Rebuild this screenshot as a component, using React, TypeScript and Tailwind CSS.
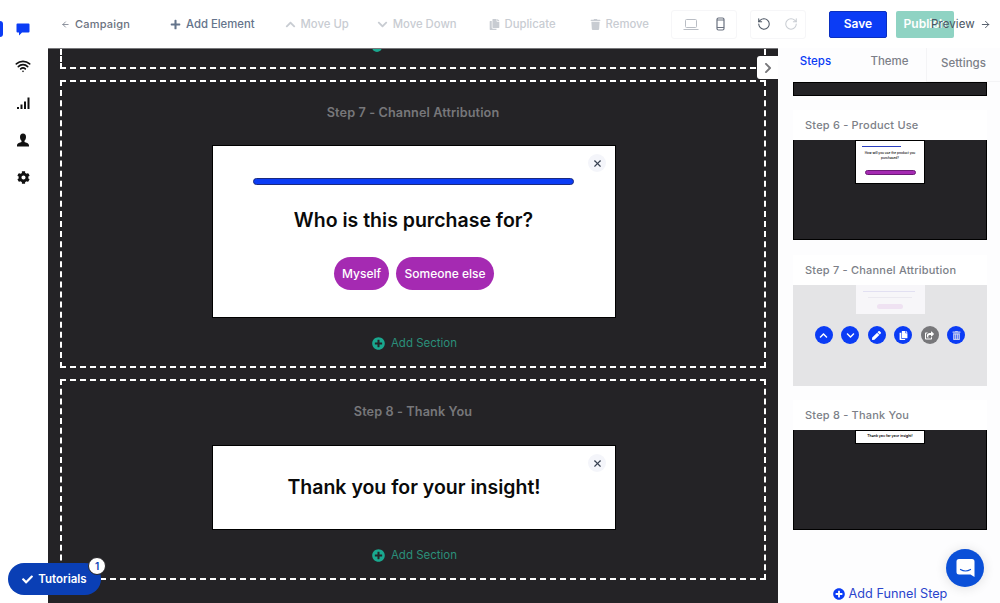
import {
  FaCheck,
  FaChevronDown,
  FaChevronRight,
  FaChevronUp,
  FaCog,
  FaCopy,
  FaPen,
  FaPlus,
  FaPlusCircle,
  FaShareSquare,
  FaTrash,
  FaTrashAlt,
} from "react-icons/fa";
import { ArrowLeft, ArrowRight, RotateCcw, RotateCw, Wifi, X } from "lucide-react";
import type { ReactNode } from "react";

function RailIcon({ active, children }: { active?: boolean; children: ReactNode }) {
  return (
    <div className="relative flex h-[37.25px] w-full items-center justify-center pr-[2px]">
      {active && <div className="absolute left-0 top-[11px] h-4 w-[3px] rounded-r bg-[#0b3cf5]" />}
      {children}
    </div>
  );
}

function ToolBtn({ icon, label, className }: { icon: ReactNode; label: string; className: string }) {
  return (
    <div className={`flex items-center gap-[5px] pt-[1px] text-[11.300px] font-medium ${className}`}>
      {icon}
      <span>{label}</span>
    </div>
  );
}

function AddSection() {
  return (
    <div className="flex items-center justify-center gap-[6px] pl-[3px] text-[11.500px] text-[#2b8f7a]">
      <FaPlusCircle className="text-[13px] text-[#1aa88f]" />
      <span>Add Section</span>
    </div>
  );
}

function Modal({ className, children }: { className: string; children: ReactNode }) {
  return (
    <div className={`relative ml-[150px] w-[404px] border border-black bg-white ${className}`}>
      <div className="absolute right-[9px] top-[8px] flex h-[18px] w-[18px] items-center justify-center rounded-full bg-[#f4f5fa]">
        <X size={11} strokeWidth={2.5} className="text-[#374151]" />
      </div>
      {children}
    </div>
  );
}

function StepCard({ title, className, children }: { title: string; className?: string; children: ReactNode }) {
  return (
    <div className={`w-[194px] ${className ?? ""}`}>
      <div className="flex h-[30px] items-center bg-white pl-3 text-[11px] font-medium tracking-[0.2px] text-[#7c7f88]">
        {title}
      </div>
      {children}
    </div>
  );
}

function ThumbAction({ bg = "bg-[#0b3cf5]", children }: { bg?: string; children: ReactNode }) {
  return (
    <div className={`flex h-[18px] w-[18px] items-center justify-center rounded-full text-[9px] text-white ${bg}`}>
      {children}
    </div>
  );
}

export default function App() {
  return (
    <div className="relative flex h-[603px] w-[1000px] overflow-hidden bg-white font-['Inter',sans-serif]">
      {/* LEFT RAIL */}
      <div className="flex w-12 flex-col pt-[10px] text-[#111]">
        <RailIcon active>
          <svg width="14" height="14" viewBox="0 0 14 14" className="text-[#0b3cf5]">
            <path fill="currentColor" d="M1.5 1.5h11a1 1 0 0 1 1 1v7a1 1 0 0 1-1 1H6l-3 3v-3H1.500a1 1 0 0 1-1-1v-7a1 1 0 0 1 1-1z" />
          </svg>
        </RailIcon>
        <RailIcon>
          <Wifi size={16} strokeWidth={2.5} />
        </RailIcon>
        <RailIcon>
          <svg width="14" height="14" viewBox="0 0 14 14">
            <path fill="currentColor" d="M1 11h2v2H1zM4.500 8.500h2V13h-2zM8 5.500h2V13H8zM11.500 1.500h2V13h-2z" />
          </svg>
        </RailIcon>
        <RailIcon>
          <svg width="14" height="14" viewBox="0 0 14 14">
            <path fill="currentColor" d="M7 .5c2 0 3 1.500 3 3.500 0 1.500-.6 3-1.500 3.800v1.200c1.500.6 4.500 1 4.500 3.500v1H1v-1c0-2.500 3-2.900 4.500-3.500V7.800C4.600 7 4 5.500 4 4 4 2 5 .5 7 .5z" />
          </svg>
        </RailIcon>
        <RailIcon>
          <FaCog className="text-[13px]" />
        </RailIcon>
      </div>

      {/* MAIN */}
      <div className="flex min-w-0 flex-1 flex-col">
        {/* TOP BAR */}
        <div className="flex h-12 shrink-0 items-center">
          <div className="ml-[13px] flex items-center gap-[5px] text-[11px] font-medium tracking-[0.2px] text-[#6b7280]">
            <ArrowLeft size={9} />
            <span>Campaign</span>
          </div>
          <ToolBtn className="ml-[40px] text-[#64748b]" icon={<FaPlus className="text-[11px]" />} label="Add Element" />
          <ToolBtn className="ml-[30px] text-[#c8ccd2]" icon={<FaChevronUp className="text-[11px]" />} label="Move Up" />
          <ToolBtn className="ml-[28px] text-[#c8ccd2]" icon={<FaChevronDown className="text-[11px]" />} label="Move Down" />
          <ToolBtn className="ml-[32px] text-[#c8ccd2]" icon={<FaCopy className="text-[11px]" />} label="Duplicate" />
          <ToolBtn className="ml-[34px] text-[#c8ccd2]" icon={<FaTrash className="text-[11px]" />} label="Remove" />
          <div className="ml-[22px] flex h-[29px] w-[66px] items-center justify-around rounded-[3px] border border-[#f6f6f8] px-[2px]">
            <svg width="16" height="13" viewBox="0 0 16 13" fill="none" className="text-[#b9bdc4]">
              <rect x="2.500" y="1.500" width="11" height="8" rx="1" stroke="currentColor" />
              <path d="M.5 11.500h15" stroke="currentColor" />
            </svg>
            <svg width="9" height="14" viewBox="0 0 9 14" fill="none" className="text-[#6b7280]">
              <rect x="1" y="1" width="7" height="12" rx="1.500" stroke="currentColor" strokeWidth="1.200" />
              <path d="M1 3h7M1 10.500h7" stroke="currentColor" />
            </svg>
          </div>
          <div className="ml-[13px] flex h-[29px] w-[56px] items-center justify-around rounded-[3px] border border-[#f6f6f8]">
            <RotateCcw size={14} strokeWidth={1.75} className="text-[#4b5563]" />
            <RotateCw size={14} strokeWidth={1.75} className="text-[#c8ccd2]" />
          </div>
          <div className="ml-[23px] flex h-[27px] w-[58px] items-center justify-center rounded-[2px] border border-[#0a2fc0] bg-[#0b3cf5] text-[12px] font-semibold text-white">
            Save
          </div>
          <div className="ml-[9px] flex h-[27px] w-[58px] items-center justify-center rounded-[2px] bg-[#8fd3c3] text-[12px] font-semibold text-white">
            Publish
          </div>
        </div>

        <div className="flex min-h-0 flex-1">
          {/* CANVAS */}
          <div className="relative w-[730px] shrink-0 overflow-hidden border-t border-[#77777a] bg-[#242326] pl-3 pr-3">
            <div className="relative h-[20px] border-2 border-t-0 border-dashed border-white">
              <div className="absolute -top-[5px] left-[310px] h-[8px] w-[10px] rounded-b-full bg-[#1aa88f]" />
            </div>
            <div className="mt-[11px] h-[288px] border-2 border-dashed border-white pt-[23px]">
              <div className="mb-[24px] text-center text-[12.700px] font-semibold leading-[16px] tracking-[0.1px] text-[#77777a]">
                Step 7 - Channel Attribution
              </div>
              <Modal className="h-[173px]">
                <div className="ml-[40px] mt-[32px] h-[7px] w-[321px] rounded-full border border-[#1a2a80] bg-[#0b3cf5]" />
                <div className="mt-[22px] pr-[1px] text-center text-[19.500px] font-semibold leading-[26px] text-[#0a0a0a]">
                  Who is this purchase for?
                </div>
                <div className="mt-[24px] flex justify-center gap-[7px] text-[12px] font-medium text-white">
                  <div className="flex h-[33px] w-[55px] items-center justify-center rounded-full bg-[#a52ab2]">Myself</div>
                  <div className="flex h-[33px] w-[98px] items-center justify-center rounded-full bg-[#a52ab2]">Someone else</div>
                </div>
              </Modal>
              <div className="mt-[17px]">
                <AddSection />
              </div>
            </div>
            <div className="mt-[11px] h-[201px] border-2 border-dashed border-white pt-[23px]">
              <div className="mb-[25px] text-center text-[12.700px] font-semibold leading-[16px] tracking-[0.1px] text-[#77777a]">
                Step 8 - Thank You
              </div>
              <Modal className="flex h-[85px] items-center justify-center">
                <div className="text-[19.500px] font-semibold text-[#0a0a0a]">Thank you for your insight!</div>
              </Modal>
              <div className="mt-[17px]">
                <AddSection />
              </div>
            </div>
          </div>

          {/* RIGHT PANEL */}
          <div className="relative flex w-[222px] shrink-0 flex-col bg-[#fdfdfe]">
            <div className="grid h-[34px] shrink-0 grid-cols-[75px_73px_74px] items-center text-center text-[11.500px] font-medium text-[#7c7f88]">
              <div className="mb-[6px] text-[#0b3cf5]">Steps</div>
              <div className="mb-[6px]">Theme</div>
              <div className="h-full border-b border-l border-[#f4f4f6] pt-[7px]">Settings</div>
            </div>
            <div className="flex min-h-0 flex-1 flex-col items-start gap-[14px] pl-[15px]">
              <div className="h-[14px] w-[194px] border border-black bg-[#242326]" />
              <StepCard title="Step 6 - Product Use">
                <div className="relative h-[100px] border-x border-b border-black bg-[#242326]">
                  <div className="mx-auto h-[44px] w-[70px] border border-black bg-white px-[6px] pt-[5px]">
                    <div className="h-[1px] w-[39px] bg-[#2a3fc0]" />
                    <div className="mt-[4px] text-center text-[3.200px] font-medium leading-[5px] text-black">
                      How will you use the product you purchased?
                    </div>
                    <div className="mx-auto mt-[9px] h-[5px] w-[51px] rounded-full border-[0.5px] border-[#6d1a78] bg-[#a52ab2]" />
                  </div>
                </div>
              </StepCard>
              <StepCard title="Step 7 - Channel Attribution" className="mt-px">
                <div className="relative h-[101px] bg-[#e4e4e6]">
                  <div className="mx-auto h-[29px] w-[69px] bg-[#f7f6f9] px-[7px] pt-[6px]">
                    <div className="h-[1px] w-[52px] bg-[#e2e0f2]" />
                    <div className="mx-auto mt-[5px] h-[1px] w-[44px] bg-[#ebe9f0]" />
                    <div className="mx-auto mt-[6px] h-[5px] w-[26px] rounded-full bg-[#efe2f2]" />
                  </div>
                  <div className="mt-[12px] flex justify-center gap-[8.600px]">
                    <ThumbAction><FaChevronUp /></ThumbAction>
                    <ThumbAction><FaChevronDown /></ThumbAction>
                    <ThumbAction><FaPen /></ThumbAction>
                    <ThumbAction><FaCopy /></ThumbAction>
                    <ThumbAction bg="bg-[#77777a]"><FaShareSquare /></ThumbAction>
                    <ThumbAction><FaTrashAlt className="text-[#c4ccf2]" /></ThumbAction>
                  </div>
                </div>
              </StepCard>
              <StepCard title="Step 8 - Thank You">
                <div className="relative h-[100px] border-x border-b border-black bg-[#242326]">
                  <div className="mx-auto flex h-[14px] w-[70px] items-center justify-center border border-black bg-white text-[3.500px] font-semibold text-black">
                    Thank you for your insight!
                  </div>
                </div>
              </StepCard>
            </div>
            <div className="flex h-[20px] shrink-0 items-center justify-center gap-[4px] pl-[2px] pt-[2px] text-[12.700px] text-[#2a45cc]">
              <FaPlusCircle className="text-[12px] text-[#0b3cf5]" />
              <span>Add Funnel Step</span>
            </div>
          </div>
        </div>
      </div>

      {/* OVERLAYS */}
      <div className="absolute left-[931px] top-[16px] flex items-center gap-[5px] text-[11.500px] tracking-[0.1px] text-[#4b5563]">
        <span>Preview</span>
        <ArrowRight size={11} />
      </div>
      <div className="absolute left-[757px] top-[56px] flex h-[23px] w-[21px] items-center justify-center rounded-l-[3px] bg-white text-[#77777a]">
        <FaChevronRight className="text-[12px]" />
      </div>
      <div className="absolute left-[8px] top-[563px] flex h-[32px] w-[93px] items-center justify-center gap-[5px] rounded-full bg-[#0a3fb5] pt-[1px] text-[11.500px] font-semibold text-white">
        <FaCheck className="text-[11px]" />
        <span>Tutorials</span>
      </div>
      <div className="absolute left-[88px] top-[557px] flex h-[18px] w-[18px] items-center justify-center rounded-full border border-[#242326] bg-white text-[10px] font-semibold text-[#0a3fb5]">
        1
      </div>
      <div className="absolute left-[946px] top-[549px] flex h-[38px] w-[38px] items-center justify-center rounded-full bg-[#0b50d8] shadow-[0_1px_12px_rgba(0,0,0,0.12)]">
        <svg width="19" height="20" viewBox="0 0 19 20">
          <path fill="white" d="M3 1h13a2.500 2.500 0 0 1 2.500 2.500V19l-4-2.500H3A2.500 2.500 0 0 1 .5 14V3.500A2.500 2.500 0 0 1 3 1z" />
          <path d="M4.500 11.500c3 1.800 7 1.800 10 0" stroke="#0b50d8" strokeWidth="1.200" fill="none" strokeLinecap="round" />
        </svg>
      </div>
    </div>
  );
}
